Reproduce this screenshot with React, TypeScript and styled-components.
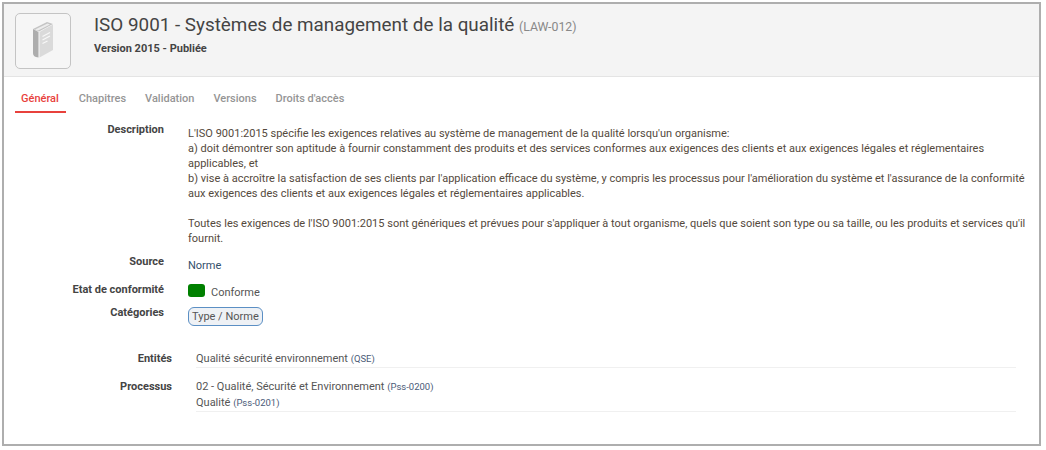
import styled, { createGlobalStyle } from "styled-components";

const GlobalStyle = createGlobalStyle`
  html, body {
    margin: 0;
    padding: 0;
    background: #fff;
    font-family: Roboto, "Liberation Sans", sans-serif;
    font-size: 11px;
    color: #444;
  }
`;

const tabs = ["Général", "Chapitres", "Validation", "Versions", "Droits d'accès"];

const BookIcon = () => (
  <svg width="21" height="36" viewBox="0 0 21 36">
    <path d="M0 7 L14 0 L20 2 L6 9.5 Z" fill="#c4c4c4" />
    <path d="M2 7.5 L14.5 1.5 L17 2.5 L5 8.5 Z" fill="#ececec" />
    <path d="M0 7 L5.5 10 V35.5 L3 35 Q0 34 0 31 Z" fill="#adadad" />
    <path d="M6.5 10 L20 2.5 V28 L6.5 35.5 Z" fill="#dadada" />
    <path d="M9.5 14.5 L17 10.5 M9.5 18 L17 14 M9.5 21.5 L14.5 19" stroke="#f8f8f8" strokeWidth="1.2" fill="none" />
  </svg>
);

export default function App() {
  return (
    <Frame>
      <GlobalStyle />
      <Header>
        <IconBox>
          <BookIcon />
        </IconBox>
        <HeaderText>
          <Title>
            ISO 9001 - Systèmes de management de la qualité <TitleCode>(LAW-012)</TitleCode>
          </Title>
          <Subtitle>Version 2015 - Publiée</Subtitle>
        </HeaderText>
      </Header>
      <Tabs>
        {tabs.map((t, i) => (
          <Tab key={t} $active={i === 0}>
            {t}
          </Tab>
        ))}
      </Tabs>
      <Details>
        <Row>
          <Label>Description</Label>
          <Description>
            L'ISO 9001:2015 spécifie les exigences relatives au système de management de la qualité lorsqu'un organisme:
            <br />
            a) doit démontrer son aptitude à fournir constamment des produits et des services conformes aux exigences des clients et aux exigences légales et réglementaires applicables, et
            <br />
            b) vise à accroître la satisfaction de ses clients par l'application efficace du système, y compris les processus pour l'amélioration du système et l'assurance de la conformité aux exigences des clients et aux exigences légales et réglementaires applicables.
            <br />
            <br />
            Toutes les exigences de l'ISO 9001:2015 sont génériques et prévues pour s'appliquer à tout organisme, quels que soient son type ou sa taille, ou les produits et services qu'il fournit.
          </Description>
        </Row>
        <SourceRow>
          <Label>Source</Label>
          <Value>Norme</Value>
        </SourceRow>
        <StateRow>
          <Label>Etat de conformité</Label>
          <StateValue>
            <Swatch />
            <StateText>Conforme</StateText>
          </StateValue>
        </StateRow>
        <CategoryRow>
          <Label>Catégories</Label>
          <Tag>Type / Norme</Tag>
        </CategoryRow>
      </Details>
      <Links>
        <LinkRow>
          <LinkLabel>Entités</LinkLabel>
          <LinkValue>
            <div>
              Qualité sécurité environnement <Code>(QSE)</Code>
            </div>
          </LinkValue>
        </LinkRow>
        <LinkRow>
          <LinkLabel>Processus</LinkLabel>
          <LinkValue>
            <div>
              02 - Qualité, Sécurité et Environnement <Code>(Pss-0200)</Code>
            </div>
            <div>
              Qualité <Code>(Pss-0201)</Code>
            </div>
          </LinkValue>
        </LinkRow>
      </Links>
    </Frame>
  );
}

const Frame = styled.div`
  box-sizing: border-box;
  width: 1039px;
  height: 444px;
  margin: 2px 0 0 2px;
  border: 2px solid #aeaeae;
  background: #fff;
`;

const Header = styled.div`
  display: flex;
  height: 73px;
  box-sizing: border-box;
  padding: 9px 0 0 11px;
  background: #f4f4f4;
  border-bottom: 1px solid #e4e4e4;
`;

const IconBox = styled.div`
  box-sizing: border-box;
  width: 56px;
  height: 56px;
  padding-bottom: 3px;
  display: flex;
  align-items: center;
  justify-content: center;
  border: 1px solid #c4c4c4;
  border-radius: 5px;
  background: #f6f6f6;
`;

const HeaderText = styled.div`
  margin-left: 23px;
`;

const Title = styled.div`
  font-size: 18.85px;
  line-height: 24px;
  margin-top: 0;
  color: #444;
`;

const TitleCode = styled.span`
  font-size: 12.3px;
  color: #888;
`;

const Subtitle = styled.div`
  margin-top: 3px;
  font-size: 11px;
  line-height: 14px;
  font-weight: 700;
  color: #444;
`;

const Tabs = styled.div`
  display: flex;
  padding: 9px 0 0 11px;
`;

const Tab = styled.div<{ $active: boolean }>`
  box-sizing: border-box;
  height: 27px;
  padding: 5px 7px 0 6px;
  margin-right: ${(p) => (p.$active ? "7px" : "6px")};
  font-size: 11px;
  line-height: 15px;
  font-weight: 500;
  color: ${(p) => (p.$active ? "#e8413c" : "#959595")};
  border-bottom: 2px solid ${(p) => (p.$active ? "#e8413c" : "transparent")};
`;

const Details = styled.div`
  padding-top: 9px;
`;

const Row = styled.div`
  display: grid;
  grid-template-columns: 160px 1fr;
  column-gap: 24px;
`;

const SourceRow = styled(Row)`
  margin-top: 8px;
`;

const StateRow = styled(Row)`
  margin-top: 9px;
`;

const CategoryRow = styled(Row)`
  margin-top: 5px;
`;

const Label = styled.div`
  text-align: right;
  font-weight: 700;
  line-height: 15px;
  color: #444;
`;

const Description = styled.div`
  line-height: 15px;
  padding-top: 4px;
  padding-right: 8px;
  color: #54493c;
`;

const Value = styled.div`
  line-height: 15px;
  padding-top: 4px;
  color: #34506b;
`;

const StateValue = styled.div`
  display: flex;
  align-items: flex-start;
`;

const Swatch = styled.span`
  width: 17px;
  height: 13px;
  margin-top: 2px;
  background: #008000;
  border-radius: 3px;
`;

const StateText = styled.span`
  margin: 3px 0 0 6px;
  line-height: 15px;
  color: #555;
`;

const Tag = styled.div`
  justify-self: start;
  box-sizing: border-box;
  height: 19px;
  margin-top: 2px;
  padding: 0 3px;
  line-height: 17px;
  border: 1px solid #5b8fc4;
  border-radius: 6px;
  background: #eef1f5;
  color: #555;
`;

const Links = styled.div`
  margin-top: 25px;
`;

const LinkRow = styled.div`
  display: grid;
  grid-template-columns: 168px 820px;
  column-gap: 24px;
  margin-bottom: 11px;
`;

const LinkLabel = styled(Label)`
  line-height: 16px;
`;

const LinkValue = styled.div`
  line-height: 16px;
  border-bottom: 1px solid #f0f0f0;
  color: #555;
`;

const Code = styled.span`
  font-size: 9.5px;
  color: #4a5a78;
`;
